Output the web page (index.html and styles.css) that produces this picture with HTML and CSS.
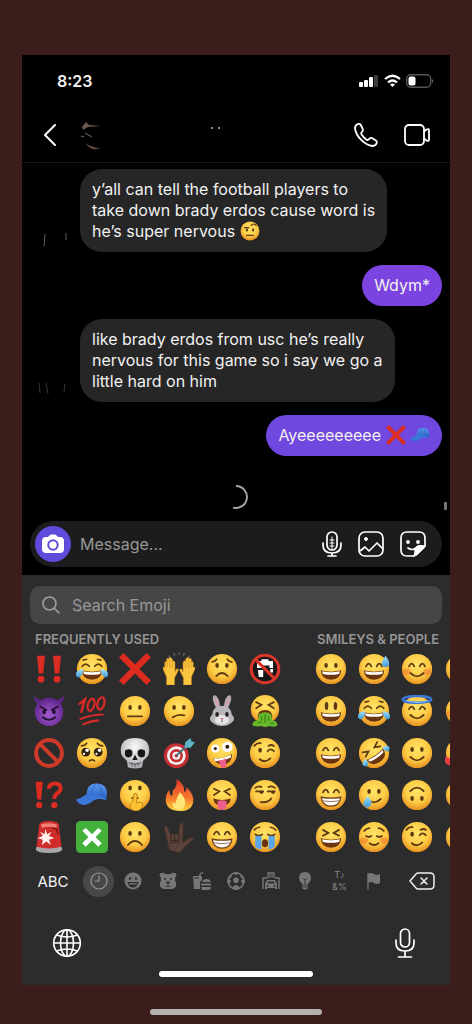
FILE: index.html
```
<!DOCTYPE html>
<html lang="en">

<head>
    <meta charset="UTF-8">
    <meta name="viewport" content="width=device-width, initial-scale=1.0">
    <title>Messages</title>
    <link rel="stylesheet" href="styles.css">
</head>

<body>
    <!-- emoji shapes -->
    <svg class="sprite" aria-hidden="true">
        <defs>
            <radialGradient id="gold" cx=".5" cy=".38" r=".64">
                <stop offset="0" stop-color="#ffe467" />
                <stop offset=".6" stop-color="#fccb45" />
                <stop offset="1" stop-color="#e58a1c" />
            </radialGradient>
            <radialGradient id="purple" cx=".5" cy=".6" r=".6">
                <stop offset="0" stop-color="#a35bd0" />
                <stop offset="1" stop-color="#5b2388" />
            </radialGradient>
            <radialGradient id="bone" cx=".5" cy=".3" r=".7">
                <stop offset="0" stop-color="#fafafa" />
                <stop offset="1" stop-color="#a9a8ad" />
            </radialGradient>
            <linearGradient id="flame" x1="0" y1="0" x2="0" y2="1">
                <stop offset="0" stop-color="#e2362a" />
                <stop offset=".6" stop-color="#f5792e" />
                <stop offset="1" stop-color="#fdd63c" />
            </linearGradient>
            <linearGradient id="tear" x1="0" y1="0" x2="0" y2="1">
                <stop offset="0" stop-color="#a6e2fa" />
                <stop offset="1" stop-color="#3d9bdc" />
            </linearGradient>
            <linearGradient id="blue" x1="0" y1="0" x2="0" y2="1">
                <stop offset="0" stop-color="#5c9cf5" />
                <stop offset="1" stop-color="#2457b8" />
            </linearGradient>
        </defs>

        <symbol id="face" viewBox="0 0 36 36">
            <circle cx="18" cy="18" r="17" fill="url(#gold)" />
        </symbol>
        <symbol id="dots" viewBox="0 0 36 36">
            <g fill="#5e3a12"><ellipse cx="12.5" cy="14" rx="2" ry="2.8" /><ellipse cx="23.5" cy="14" rx="2" ry="2.8" /></g>
        </symbol>
        <symbol id="arcs" viewBox="0 0 36 36">
            <path d="M9 15q3-6 6 0M21 15q3-6 6 0" fill="none" stroke="#5e3a12" stroke-width="2" stroke-linecap="round" />
        </symbol>
        <symbol id="grin-mouth" viewBox="0 0 36 36">
            <path d="M6.500 19.500q11.500 3 23 0q-.5 10.500-11.500 10.500t-11.500-10.500z" fill="#6b3510" />
            <path d="M8 20.500q10 2.500 20 0l-.8 3q-9.200 2-18.400 0z" fill="#fff" />
        </symbol>
        <symbol id="smile-mouth" viewBox="0 0 36 36">
            <path d="M10.500 22.500q7.500 7.500 15 0" fill="none" stroke="#5e3a12" stroke-width="2" stroke-linecap="round" />
        </symbol>

        <symbol id="e-bangs" viewBox="0 0 36 36">
            <g fill="#dc2b20"><path d="M4.500 3h9l-2 20h-5zM22.500 3h9l-2 20h-5z" /><circle cx="9" cy="29.500" r="3.800" /><circle cx="27" cy="29.500" r="3.800" /></g>
        </symbol>
        <symbol id="e-joy" viewBox="0 0 36 36">
            <use href="#face" /><use href="#grin-mouth" />
            <path d="M7 15q4-5 8 0M21 15q4-5 8 0M8 8l4-1M24 7l4 1" fill="none" stroke="#5e3a12" stroke-width="1.800" stroke-linecap="round" />
            <path d="M8 18q-8 1-8 6q0 4 4 3q4-2 4-9zM28 18q8 1 8 6q0 4-4 3q-4-2-4-9z" fill="url(#tear)" />
        </symbol>
        <symbol id="e-cross" viewBox="0 0 36 36">
            <path d="M5 0l13 13L31 0l5 5-13 13 13 13-5 5-13-13L5 36l-5-5 13-13L0 5z" fill="#dd2b20" />
        </symbol>
        <symbol id="e-hands" viewBox="0 0 36 36">
            <g id="hand-l" fill="#f9c440" stroke="#c98417" stroke-width=".6">
                <path d="M4 36v-9l-4-9q-1-3 2-2V11q0-2 2-1V8q0-3 2.500-1.500Q8 3 10.500 7v2q3-1 3 3v9l1.500-3q3-1 2 2l-4 8v8z" />
                <path d="M4.500 9v8M7.500 7v10M10.500 8v9" fill="none" />
            </g>
            <use href="#hand-l" transform="matrix(-1 0 0 1 36 0)" />
            <path d="M6 3l1.500 2M12 0l1 3M18 -1v3M24 0l-1 3M30 3l-1.500 2" stroke="#67676b" stroke-width="1.600" />
        </symbol>
        <symbol id="e-worried" viewBox="0 0 36 36">
            <use href="#face" /><use href="#dots" />
            <path d="M11.500 26q6.500-7 13 0M7 10q3 0 5-3M29 10q-3 0-5-3" fill="none" stroke="#5e3a12" stroke-width="2" stroke-linecap="round" />
        </symbol>
        <symbol id="e-nonpotable" viewBox="0 0 36 36">
            <circle cx="18" cy="18" r="15" fill="#171717" />
            <path d="M9 9h5V7h8v2h5v8h-4v-3h-8v3H9zM10 19h6v8h-5zM24 18h3v4h-3z" fill="#fff" />
            <circle cx="18" cy="18" r="15.500" fill="none" stroke="#d9362b" stroke-width="3.500" />
            <path d="M7 7l22 22" stroke="#d9362b" stroke-width="3.500" />
        </symbol>
        <symbol id="e-imp" viewBox="0 0 36 36">
            <path d="M1 0q0 9 6 11l6-5Q4 6 1 0zM35 0q0 9-6 11l-6-5q9 0 12-6z" fill="#5c2785" />
            <circle cx="18" cy="19" r="16" fill="url(#purple)" />
            <path d="M8 13l7 4M28 13l-7 4M11 25q7 6 14 0" fill="none" stroke="#231033" stroke-width="2" stroke-linecap="round" />
            <ellipse cx="12.500" cy="19" rx="2" ry="2.500" fill="#231033" /><ellipse cx="23.500" cy="19" rx="2" ry="2.500" fill="#231033" />
        </symbol>
        <symbol id="e-hundred" viewBox="0 0 36 36">
            <g fill="none" stroke="#d62a26" stroke-linecap="round">
                <path d="M4 10l6-5L6 19" stroke-width="2.800" />
                <ellipse cx="17" cy="11" rx="3.600" ry="7" transform="rotate(16 17 11)" stroke-width="2.600" />
                <ellipse cx="28" cy="9.500" rx="3.800" ry="7" transform="rotate(16 28 9.500)" stroke-width="2.600" />
                <path d="M5 27q13-5 25-5M8 33q8-4 17-4.500" stroke-width="2.400" />
            </g>
        </symbol>
        <symbol id="e-neutral" viewBox="0 0 36 36">
            <use href="#face" /><use href="#dots" />
            <path d="M10 24h16" stroke="#5e3a12" stroke-width="2" stroke-linecap="round" />
        </symbol>
        <symbol id="e-confused" viewBox="0 0 36 36">
            <use href="#face" /><use href="#dots" />
            <path d="M11 25q6-4 13-2" fill="none" stroke="#5e3a12" stroke-width="2" stroke-linecap="round" />
        </symbol>
        <symbol id="e-rabbit" viewBox="0 0 36 36">
            <path d="M12 16Q5 3 9 0q6 1 7 14zM24 16q7-13 3-16q-6 1-7 14z" fill="#b2adb4" />
            <path d="M12.500 13Q9 5 10 3q4 3 4 10zM23.500 13Q27 5 26 3q-4 3-4 10z" fill="#d99caf" />
            <path d="M18 12q10 0 11 10 5 5 0 9-5 4-11 4t-11-4q-5-4 0-9 1-10 11-10z" fill="#b9b5ba" />
            <ellipse cx="18" cy="28" rx="8" ry="5.500" fill="#e6e3e6" />
            <ellipse cx="12.500" cy="22" rx="2" ry="2.800" fill="#29242a" /><ellipse cx="23.500" cy="22" rx="2" ry="2.800" fill="#29242a" />
            <path d="M16 26h4l-2 2.500z" fill="#d07388" /><path d="M18 28v3" stroke="#5f565f" />
        </symbol>
        <symbol id="e-vomit" viewBox="0 0 36 36">
            <circle cx="18" cy="16" r="16" fill="url(#gold)" />
            <path d="M8 8l6 3-6 4M28 8l-6 3 6 4" fill="none" stroke="#5e3a12" stroke-width="2" stroke-linecap="round" />
            <path d="M10 26q-1-9 8-9t8 9z" fill="#6b3510" />
            <path d="M11 22q7-5 14 0l1 6q6 1 6 6-4 3-9 1-5 2-9 0-6 1-10-1-1-4 6-6z" fill="#68b82b" />
            <path d="M14 24v5M18 22v9M22 24v5M10 31h4M24 32h4" stroke="#3f8d1b" stroke-width="1.600" />
        </symbol>
        <symbol id="e-noentry" viewBox="0 0 36 36">
            <circle cx="18" cy="18" r="14.500" fill="none" stroke="#ce3a29" stroke-width="4.500" />
            <path d="M8 8l20 20" stroke="#ce3a29" stroke-width="4.500" />
        </symbol>
        <symbol id="e-pleading" viewBox="0 0 36 36">
            <use href="#face" />
            <circle cx="11" cy="17" r="5" fill="#33200f" /><circle cx="25" cy="17" r="5" fill="#33200f" />
            <g fill="#fff"><circle cx="12.500" cy="15" r="2" /><circle cx="26.500" cy="15" r="2" /><circle cx="9" cy="19" r="1.200" /><circle cx="23" cy="19" r="1.200" /></g>
            <path d="M15 27q3-2.500 6 0M6 10q4 0 6-3M30 10q-4 0-6-3" fill="none" stroke="#5e3a12" stroke-width="1.800" stroke-linecap="round" />
        </symbol>
        <symbol id="e-skull" viewBox="0 0 36 36">
            <path d="M18 1q16 0 16 14 0 6-4 9l-3 3-1 7q-8 3-16 0l-1-7-3-3q-4-3-4-9Q2 1 18 1z" fill="url(#bone)" />
            <path d="M7 15q6-3 8 1 1 6-4 7-6 0-4-8zM29 15q-6-3-8 1-1 6 4 7 6 0 4-8zM18 20l3 6h-6z" fill="#17171a" />
            <path d="M11 29q7 3 14 0M14.500 29v4M18 30v4M21.500 29v4" fill="none" stroke="#4c4b50" />
        </symbol>
        <symbol id="e-dart" viewBox="0 0 36 36">
            <circle cx="15" cy="21" r="14" fill="#c72f37" /><circle cx="15" cy="21" r="10.500" fill="#f3efed" />
            <circle cx="15" cy="21" r="7.500" fill="#c72f37" /><circle cx="15" cy="21" r="4.500" fill="#f3efed" /><circle cx="15" cy="21" r="2" fill="#c72f37" />
            <path d="M15 21L27 10" stroke="#2e6978" stroke-width="2" />
            <path d="M24 12l1-6 6-5 1 4 4 1-5 6z" fill="#5fb5c9" />
        </symbol>
        <symbol id="e-zany" viewBox="0 0 36 36">
            <use href="#face" />
            <circle cx="10.500" cy="13" r="4.500" fill="#fff" /><circle cx="24" cy="11" r="6" fill="#fff" />
            <circle cx="10.500" cy="13" r="1.800" fill="#33200f" /><circle cx="24" cy="11" r="2.200" fill="#33200f" />
            <path d="M8 24q11 1 21-5 1 9-8 12-9 1-13-7z" fill="#6b3510" /><path d="M9 24q10 1 19-4v3q-9 5-18 4z" fill="#fff" />
            <path d="M14 26q4 1 8-2l1 8q-2 4-6 2z" fill="#ee5f8c" />
        </symbol>
        <symbol id="e-wink" viewBox="0 0 36 36">
            <use href="#face" /><ellipse cx="12.500" cy="15" rx="2" ry="2.800" fill="#5e3a12" />
            <path d="M21 16q3-4 7 0M6 10q3-4 7-3M22 10q3-2 6 0M12 25q6 5 12-1" fill="none" stroke="#5e3a12" stroke-width="2" stroke-linecap="round" />
        </symbol>
        <symbol id="e-interrobang" viewBox="0 0 36 36">
            <path d="M3 3h8l-1.800 20H4.800z" fill="#dc2b20" /><circle cx="7" cy="29.500" r="3.500" fill="#dc2b20" />
            <path d="M18 11q0-6 7-6 6 0 6 5.500 0 3.500-4 6-3 2-3 6" fill="none" stroke="#dc2b20" stroke-width="4.600" /><circle cx="24" cy="29.500" r="3.500" fill="#dc2b20" />
        </symbol>
        <symbol id="e-cap" viewBox="0 0 36 36">
            <path d="M12 20Q11 5 23 5q12 0 12 12l-1 7q-9-4-18 0z" fill="url(#blue)" />
            <path d="M12 17q-6 5-12 6 3 7 11 6 5-1 9-5 7-3 14 0-3-7-22-7z" fill="#3a76da" />
            <path d="M23 5q-6 5-5 13M24 5q6 5 5 14" fill="none" stroke="#2b5cb5" stroke-width=".8" />
        </symbol>
        <symbol id="e-shush" viewBox="0 0 36 36">
            <use href="#face" /><use href="#dots" y="-4" />
            <path d="M14 22q4-3 8 0" fill="none" stroke="#5e3a12" stroke-width="1.800" />
            <path d="M18 16q3 0 2.500 3l-1 8 5-1q3 0 2 4-2 6-8 6-6-1-6-6 0-2 3-5l1-7q0-2 1.500-2z" fill="#fcc232" stroke="#b8730f" stroke-width=".9" />
        </symbol>
        <symbol id="e-fire" viewBox="0 0 36 36">
            <path d="M15 0q10 6 9 15 3-2 2-6 9 8 8 16-1 11-15 11Q4 36 3 24q0-7 4-12 0 5 3 7 1-2 1-6 6-5 4-13z" fill="url(#flame)" />
            <path d="M19 15q7 7 6 13-1 6-7 7-8-1-7-9 1 1 3 2 1-7 5-13z" fill="#ffe879" />
        </symbol>
        <symbol id="e-squint-tongue" viewBox="0 0 36 36">
            <use href="#face" />
            <path d="M9 11l6 3-6 4M27 11l-6 3 6 4" fill="none" stroke="#5e3a12" stroke-width="2" stroke-linecap="round" />
            <path d="M8 22q10 3 20 0-1 8-10 8T8 22z" fill="#6b3510" /><path d="M13 25q5-2 10 0v7q-5 6-10 0z" fill="#ee5f8c" />
        </symbol>
        <symbol id="e-smirk" viewBox="0 0 36 36">
            <use href="#face" /><ellipse cx="14" cy="15" rx="2" ry="2" fill="#5e3a12" /><ellipse cx="27" cy="15" rx="2" ry="2" fill="#5e3a12" />
            <path d="M8 14h8M21 14h8M7 10q4-3 7-1M22 9q4-2 7 1M13 26q9 1 12-4" fill="none" stroke="#5e3a12" stroke-width="2" stroke-linecap="round" />
        </symbol>
        <symbol id="e-siren" viewBox="0 0 36 36">
            <path d="M4 29h28l1 3q-2 4-15 4T3 32z" fill="#aaa7aa" />
            <path d="M7 4q1-4 11-4t11 4l3 25q-14 4-28 0z" fill="#cf2d2b" />
            <path d="M9 4q8-3 18 0l-1 4q-8-3-16 0z" fill="#f18178" />
            <path d="M14 9l2 6 5-3-3 5 6 2-6 2 2 6-5-4-5 4 1-6-6-2 6-2-3-5 5 3z" fill="#fff0eb" />
            <path d="M22 8q6 0 6 7" fill="none" stroke="#7d1515" stroke-width="2" />
        </symbol>
        <symbol id="e-green-cross" viewBox="0 0 36 36">
            <rect width="36" height="36" rx="5" fill="#43b03a" />
            <path d="M11 8l7 7 7-7 4 3-7 7 7 7-4 4-7-7-7 7-4-4 7-7-7-7z" fill="#fff" />
        </symbol>
        <symbol id="e-frown" viewBox="0 0 36 36">
            <use href="#face" /><use href="#dots" />
            <path d="M10 27q8-9 16 0" fill="none" stroke="#5e3a12" stroke-width="2" stroke-linecap="round" />
        </symbol>
        <symbol id="e-love-hand" viewBox="0 0 36 36">
            <path d="M7 33L4 19 1 8q1-4 4-1l4 9q2-4 4 0 2-4 4 0l2-13q3-3 4 1l-1 20 8-5q6-2 5 1l-10 9-6 7z" fill="#5a4238" stroke="#3a2a24" stroke-width=".7" />
            <path d="M9 16v6h4v-6M13 22h5v-7M7 25q7-3 12 0" fill="none" stroke="#33241f" />
        </symbol>
        <symbol id="e-beam" viewBox="0 0 36 36">
            <use href="#face" /><use href="#arcs" />
            <path d="M7 20.500q11 2 22 0-1 10-11 10t-11-10z" fill="#fff" stroke="#70401a" stroke-width="1.500" />
            <path d="M8 24.500q10 2 20 0" fill="none" stroke="#8a6544" stroke-width="1" />
        </symbol>
        <symbol id="e-sob" viewBox="0 0 36 36">
            <use href="#face" />
            <path d="M6 10q3-3 6-3M30 10q-3-3-6-3M7 15q4 3 8 0M21 15q4 3 8 0" fill="none" stroke="#5e3a12" stroke-width="1.800" stroke-linecap="round" />
            <path d="M7 17h7v15q-4 0-7-3zM22 17h7v12q-3 3-7 3z" fill="#5aa6e8" /><ellipse cx="18" cy="25" rx="3.500" ry="4.500" fill="#6b3510" />
        </symbol>
        <symbol id="e-grinning" viewBox="0 0 36 36">
            <use href="#face" /><use href="#dots" /><use href="#grin-mouth" />
        </symbol>
        <symbol id="e-sweat" viewBox="0 0 36 36">
            <use href="#face" /><use href="#arcs" /><use href="#grin-mouth" />
            <path d="M31 3q5 7 4 10-1 3-4 3t-4-3q-1-3 4-10z" fill="url(#tear)" />
        </symbol>
        <symbol id="e-blush" viewBox="0 0 36 36">
            <use href="#face" /><use href="#arcs" /><use href="#smile-mouth" />
            <g fill="#ef682b" opacity=".45"><ellipse cx="6.500" cy="21" rx="4.500" ry="3.500" /><ellipse cx="29.500" cy="21" rx="4.500" ry="3.500" /></g>
        </symbol>
        <symbol id="e-smiley" viewBox="0 0 36 36">
            <use href="#face" /><use href="#grin-mouth" />
            <g fill="#5e3a12"><ellipse cx="13" cy="12.500" rx="2" ry="4.500" /><ellipse cx="23" cy="12.500" rx="2" ry="4.500" /></g>
        </symbol>
        <symbol id="e-halo" viewBox="0 0 36 36">
            <use href="#face" /><use href="#arcs" y="1" /><use href="#smile-mouth" />
            <ellipse cx="18" cy="5" rx="16" ry="3.800" fill="none" stroke="#3d78d8" stroke-width="2.800" />
            <path d="M5 6q13 5 26 0" fill="none" stroke="#8fc6ff" stroke-width="1" />
        </symbol>
        <symbol id="e-smile" viewBox="0 0 36 36">
            <use href="#face" /><use href="#arcs" /><use href="#grin-mouth" />
        </symbol>
        <symbol id="e-rofl" viewBox="0 0 36 36">
            <use href="#face" />
            <g transform="rotate(-35 18 18)"><use href="#grin-mouth" />
                <path d="M8 10l6 3-6 3M28 10l-6 3 6 3" fill="none" stroke="#5e3a12" stroke-width="2" stroke-linecap="round" />
                <path d="M7 18q-8 1-7 5 3 4 6 1zM29 18q8 1 7 5-3 4-6 1z" fill="url(#tear)" /></g>
        </symbol>
        <symbol id="e-slight" viewBox="0 0 36 36">
            <use href="#face" /><use href="#dots" /><use href="#smile-mouth" />
        </symbol>
        <symbol id="e-upside" viewBox="0 0 36 36">
            <use href="#face" />
            <g transform="rotate(180 18 18)"><use href="#dots" /><use href="#smile-mouth" /></g>
        </symbol>
        <symbol id="e-touched" viewBox="0 0 36 36">
            <use href="#face" /><use href="#dots" /><use href="#smile-mouth" />
            <path d="M11 19q5 6 4 9-1 3-4 4-4 0-5-4 0-3 5-9z" fill="url(#tear)" />
        </symbol>
        <symbol id="e-laughing" viewBox="0 0 36 36">
            <use href="#face" /><use href="#grin-mouth" />
            <path d="M9 10l6 3.500-6 3M27 10l-6 3.500 6 3" fill="none" stroke="#5e3a12" stroke-width="2" stroke-linecap="round" />
        </symbol>
        <symbol id="e-relaxed" viewBox="0 0 36 36">
            <use href="#face" />
            <path d="M9 17q3 2 6 0M21 17q3 2 6 0M7 11q3-3 6-3M29 11q-3-3-6-3M13 25q5 4 10 0" fill="none" stroke="#5e3a12" stroke-width="2" stroke-linecap="round" />
            <g fill="#ef682b" opacity=".45"><ellipse cx="7" cy="22" rx="4.500" ry="3.500" /><ellipse cx="29" cy="22" rx="4.500" ry="3.500" /></g>
        </symbol>
        <symbol id="e-hearts" viewBox="0 0 36 36">
            <use href="#face" /><use href="#arcs" /><use href="#smile-mouth" />
            <path d="M4 32q-7-5-5-8 3-3 5 0 3-3 5 0 2 4-5 8z" fill="#e63c42" />
        </symbol>
        <symbol id="e-raised-brow" viewBox="0 0 36 36">
            <use href="#face" /><use href="#dots" y="2" />
            <path d="M8 12h8M20 8q5-5 9 0M12 26h12" fill="none" stroke="#5e3a12" stroke-width="2.200" stroke-linecap="round" />
        </symbol>
    </svg>

    <main class="phone">
        <div class="statusbar">
            <time class="clock">8:23</time>
            <div class="statusicons">
                <svg width="20" height="14" viewBox="0 0 20 14" fill="#fff" aria-hidden="true">
                    <rect x="0" y="8" width="4" height="5" rx="1" /><rect x="5" y="6" width="4" height="7" rx="1" />
                    <rect x="10" y="3" width="4" height="10" rx="1" /><rect x="15" y="1" width="4" height="12" rx="1" fill="#3c3c3c" />
                </svg>
                <svg width="17" height="14" viewBox="0 0 17 14" fill="none" stroke="#fff" stroke-width="2.200" aria-hidden="true">
                    <path d="M1 5q7.500-6.500 15 0M4 8.500q4.500-4 9 0" /><path d="M6 10.500q2.500-2 5 0L8.500 13z" fill="#fff" stroke="none" />
                </svg>
                <svg width="28" height="14" viewBox="0 0 28 14" aria-hidden="true">
                    <rect x=".7" y=".7" width="24" height="12.600" rx="4" fill="none" stroke="#555" stroke-width="1.400" />
                    <rect x="2.500" y="2.500" width="7" height="9" rx="2" fill="#fff" /><path d="M26 5q2 2 0 4z" fill="#777" />
                </svg>
            </div>
        </div>

        <header class="chatheader">
            <button class="iconbtn" aria-label="Back">
                <svg width="14" height="22" viewBox="0 0 14 22" fill="none" stroke="#fff" stroke-width="2" stroke-linecap="round" stroke-linejoin="round"><path d="M12 1L2 11l10 10" /></svg>
            </button>
            <!-- what is left of the scribbled out name -->
            <svg class="scribble" width="150" height="32" viewBox="0 0 150 32" aria-hidden="true">
                <path d="M2 8l4-5 3 3 12 1-13 1-5 3z" fill="#6e574d" /><path d="M5 14l7 4M1 17l3 1" stroke="#776c68" />
                <path d="M5 24q7 5 16 5-9 3-13-2z" fill="#6b4c40" />
                <path d="M131 9h2M138 9h2" stroke="#b9b9b9" stroke-width="1.500" />
            </svg>
            <button class="iconbtn" aria-label="Audio call">
                <svg width="24" height="24" viewBox="0 0 24 24" fill="none" stroke="#fff" stroke-width="1.800" stroke-linejoin="round"><path d="M3.300 1.300Q1 2.500 1 5.500 2 12 7.500 17.200 13 22.500 18.500 23q3 0 4.200-2.800.6-1.600-.8-2.700l-3.600-2.300q-1.500-.8-2.800.4l-1.300 1.200q-.8.500-1.600-.1-3.200-2.400-5.200-5.500-.4-.8.100-1.600l1-1.400q.9-1.300 0-2.700L6.800 1.900Q5.500.3 3.300 1.300z" /></svg>
            </button>
            <button class="iconbtn" aria-label="Video call">
                <svg width="26" height="24" viewBox="0 0 26 24" fill="none" stroke="#fff" stroke-width="1.800" stroke-linejoin="round"><rect x="1" y="2" width="19" height="20" rx="4" /><path d="M20 8.500l2.500-2q2.500-1.200 2.500 1v9q0 2.200-2.500 1L20 15.500" /></svg>
            </button>
        </header>

        <section class="thread">
            <div class="received">
                <svg class="avatar" width="36" height="24" viewBox="0 0 36 24" aria-hidden="true"><path d="M2 6l-1 12M23 5v7" stroke="#655b57" /></svg>
                <p class="bubble">y’all can tell the football players to<br>take down brady erdos cause word is<br>he’s super nervous <svg class="inlineemoji" role="img" aria-label="raised eyebrow"><use href="#e-raised-brow" /></svg></p>
            </div>
            <p class="bubble sent">Wdym*</p>
            <div class="received">
                <svg class="avatar" width="36" height="24" viewBox="0 0 36 24" aria-hidden="true"><path d="M-4 5l1 10M3 5l2 11M22 6l-1 8" stroke="#3e332f" /></svg>
                <p class="bubble">like brady erdos from usc he’s really<br>nervous for this game so i say we go a<br>little hard on him</p>
            </div>
            <p class="bubble sent blue">Ayeeeeeeeee <svg class="inlineemoji" role="img" aria-label="cross mark"><use href="#e-cross" /></svg> <svg class="inlineemoji" role="img" aria-label="cap"><use href="#e-cap" /></svg></p>
            <div class="loading">
                <svg width="24" height="24" viewBox="0 0 24 24" fill="none" stroke="#a3a3a3" stroke-width="2" aria-hidden="true"><path d="M12 1a11 11 0 1 1-3 21.600" /></svg>
                <span class="scrollmark"></span>
            </div>
        </section>

        <form class="composer">
            <button type="button" class="camera" aria-label="Camera">
                <svg width="22" height="20" viewBox="0 0 22 20"><path d="M7 2q1-1.500 2-1.500h4q1 0 2 1.500l1 1h2q4 0 4 4v8q0 4-4 4H4q-4 0-4-4V7q0-4 4-4h2z" fill="#fff" /><circle cx="11" cy="11" r="4.700" fill="none" stroke="#5e4bdc" stroke-width="2" /></svg>
            </button>
            <input class="messagebox" type="text" placeholder="Message..." aria-label="Message">
            <button type="button" class="iconbtn" aria-label="Voice message">
                <svg width="20" height="26" viewBox="0 0 20 26" fill="none" stroke="#fff" stroke-width="1.700" stroke-linecap="round"><rect x="5" y="1" width="10" height="18" rx="5" /><path d="M1 12v2q0 8 9 8t9-8v-2M10 22v3M6 25h8" /><path d="M8 9h4M8 12h4M8 15h4M10 6v12" stroke-width="1" /></svg>
            </button>
            <button type="button" class="iconbtn" aria-label="Photo">
                <svg width="26" height="26" viewBox="0 0 26 26" fill="none" stroke="#fff" stroke-width="1.700" stroke-linejoin="round"><rect x="1" y="1" width="24" height="24" rx="6" /><circle cx="8" cy="8" r="1.500" fill="#fff" stroke-width="1" /><path d="M2 20l5-4 4 4 8-8 6 6" /></svg>
            </button>
            <button type="button" class="iconbtn" aria-label="Sticker">
                <svg width="26" height="26" viewBox="0 0 26 26" fill="none" stroke="#fff" stroke-width="1.700" stroke-linecap="round"><path d="M14 25H7q-6 0-6-6V7q0-6 6-6h12q6 0 6 6v8M8 17q4 3 8 0" /><path d="M14 25q2 0 4-2l5-5q2-1 2-3-9-2-10 3 0 4-1 7z" fill="#fff" stroke-width="1" /><g fill="#fff" stroke="none"><circle cx="8" cy="11" r="1.900" /><circle cx="18" cy="11" r="1.900" /></g></svg>
            </button>
        </form>

        <section class="keyboard">
            <label class="search">
                <svg width="18" height="18" viewBox="0 0 18 18" fill="none" stroke="#a0a0a0" stroke-width="1.600" stroke-linecap="round" aria-hidden="true"><circle cx="7.500" cy="7.500" r="6.500" /><path d="M12.200 12.200L17 17" /></svg>
                <input type="search" placeholder="Search Emoji" aria-label="Search Emoji">
            </label>

            <div class="emojipages">
                <div class="emojipage">
                    <h2>FREQUENTLY USED</h2>
                    <div class="emojigrid">
                        <button aria-label="double exclamation"><svg><use href="#e-bangs" /></svg></button>
                        <button aria-label="tears of joy"><svg><use href="#e-joy" /></svg></button>
                        <button aria-label="cross mark"><svg><use href="#e-cross" /></svg></button>
                        <button aria-label="raising hands"><svg><use href="#e-hands" /></svg></button>
                        <button aria-label="worried"><svg><use href="#e-worried" /></svg></button>
                        <button aria-label="non-potable water"><svg><use href="#e-nonpotable" /></svg></button>

                        <button aria-label="smiling imp"><svg><use href="#e-imp" /></svg></button>
                        <button aria-label="hundred points"><svg><use href="#e-hundred" /></svg></button>
                        <button aria-label="neutral"><svg><use href="#e-neutral" /></svg></button>
                        <button aria-label="confused"><svg><use href="#e-confused" /></svg></button>
                        <button aria-label="rabbit"><svg><use href="#e-rabbit" /></svg></button>
                        <button aria-label="vomiting"><svg><use href="#e-vomit" /></svg></button>

                        <button aria-label="prohibited"><svg><use href="#e-noentry" /></svg></button>
                        <button aria-label="pleading"><svg><use href="#e-pleading" /></svg></button>
                        <button aria-label="skull"><svg><use href="#e-skull" /></svg></button>
                        <button aria-label="bullseye"><svg><use href="#e-dart" /></svg></button>
                        <button aria-label="zany"><svg><use href="#e-zany" /></svg></button>
                        <button aria-label="winking"><svg><use href="#e-wink" /></svg></button>

                        <button aria-label="exclamation question"><svg><use href="#e-interrobang" /></svg></button>
                        <button aria-label="cap"><svg><use href="#e-cap" /></svg></button>
                        <button aria-label="shushing"><svg><use href="#e-shush" /></svg></button>
                        <button aria-label="fire"><svg><use href="#e-fire" /></svg></button>
                        <button aria-label="squinting with tongue"><svg><use href="#e-squint-tongue" /></svg></button>
                        <button aria-label="smirking"><svg><use href="#e-smirk" /></svg></button>

                        <button aria-label="police light"><svg><use href="#e-siren" /></svg></button>
                        <button aria-label="cross mark button"><svg><use href="#e-green-cross" /></svg></button>
                        <button aria-label="frowning"><svg><use href="#e-frown" /></svg></button>
                        <button aria-label="love you gesture"><svg><use href="#e-love-hand" /></svg></button>
                        <button aria-label="beaming"><svg><use href="#e-beam" /></svg></button>
                        <button aria-label="sobbing"><svg><use href="#e-sob" /></svg></button>
                    </div>
                </div>
                <div class="emojipage">
                    <h2>SMILEYS &amp; PEOPLE</h2>
                    <div class="emojigrid">
                        <button aria-label="grinning"><svg><use href="#e-grinning" /></svg></button>
                        <button aria-label="grinning with sweat"><svg><use href="#e-sweat" /></svg></button>
                        <button aria-label="blushing smile"><svg><use href="#e-blush" /></svg></button>
                        <button class="lastcol" aria-label="smile"><svg><use href="#face" /></svg></button>

                        <button aria-label="big smile"><svg><use href="#e-smiley" /></svg></button>
                        <button aria-label="tears of joy"><svg><use href="#e-joy" /></svg></button>
                        <button aria-label="halo"><svg><use href="#e-halo" /></svg></button>
                        <button class="lastcol" aria-label="blush"><svg><use href="#e-blush" /></svg></button>

                        <button aria-label="smiling eyes"><svg><use href="#e-smile" /></svg></button>
                        <button aria-label="rolling laughing"><svg><use href="#e-rofl" /></svg></button>
                        <button aria-label="slight smile"><svg><use href="#e-slight" /></svg></button>
                        <button class="lastcol" aria-label="hearts"><svg><use href="#e-hearts" /></svg></button>

                        <button aria-label="beaming"><svg><use href="#e-beam" /></svg></button>
                        <button aria-label="smiling with tear"><svg><use href="#e-touched" /></svg></button>
                        <button aria-label="upside down"><svg><use href="#e-upside" /></svg></button>
                        <button class="lastcol" aria-label="smile"><svg><use href="#face" /></svg></button>

                        <button aria-label="squinting laugh"><svg><use href="#e-laughing" /></svg></button>
                        <button aria-label="relaxed"><svg><use href="#e-relaxed" /></svg></button>
                        <button aria-label="winking"><svg><use href="#e-wink" /></svg></button>
                        <button class="lastcol" aria-label="smile"><svg><use href="#face" /></svg></button>
                    </div>
                </div>
            </div>

            <nav class="categories" aria-label="Emoji categories">
                <button class="abc">ABC</button>
                <div class="categorylist">
                    <button class="active" aria-label="Recent"><svg viewBox="0 0 18 18" fill="none" stroke="#999" stroke-width="1.200"><circle cx="9" cy="9" r="8" /><path d="M9 3.500V9H5" /></svg></button>
                    <button aria-label="Smileys"><svg viewBox="0 0 18 18"><circle cx="9" cy="9" r="8.500" fill="#777" /><path d="M3.500 10h11q-1 5.500-5.500 5.500T3.500 10z" fill="#2c2c2c" /><path d="M5 11.200h8v1.300H5z" fill="#777" /><circle cx="6" cy="6.500" r="1.200" fill="#2c2c2c" /><circle cx="12" cy="6.500" r="1.200" fill="#2c2c2c" /></svg></button>
                    <button aria-label="Animals"><svg viewBox="0 0 18 18"><path d="M2 6Q-1 2 2 1q3-1 4 1h6q1-2 4-1 3 1 0 5 0 3 1 5 1 6-5 6H6q-6 0-5-6 1-2 1-5z" fill="#777" /><circle cx="6" cy="7" r="1" fill="#2c2c2c" /><circle cx="12" cy="7" r="1" fill="#2c2c2c" /><path d="M7 10h4l-2 2zM9 12v1.500M6.500 14q2.500 1 5 0" fill="#2c2c2c" stroke="#2c2c2c" stroke-width=".7" /></svg></button>
                    <button aria-label="Food"><svg viewBox="0 0 18 18"><path d="M0 4h9v4q-2 1-2 3v6H1zM6 4l1-3 3-1 .5 1-2.500 1-.5 2zM9 10q1-3 4.500-3T18 10zM8 11.500h10v2H8zM8 15h10q0 3-3 3H9z" fill="#777" /><path d="M1 6h5" stroke="#2c2c2c" /></svg></button>
                    <button aria-label="Activity"><svg viewBox="0 0 18 18"><circle cx="9" cy="9" r="8" fill="none" stroke="#777" stroke-width="1.600" /><path d="M6 7l3-2 3 2-1 4H7zM5 1l4 2 4-2-4-1zM1 7l3 1-1 4-3-2zM17 7l-3 1 1 4 3-2zM6 14l3-1 3 1-1 4H7zM3 3l2 1-2 3zM15 3l-2 1 2 3z" fill="#777" /></svg></button>
                    <button aria-label="Travel"><svg viewBox="0 0 18 18"><path d="M6 6V1h6v5M1 17V6h4M17 17V6h-4" fill="none" stroke="#777" stroke-width="1.400" /><path d="M5 8h8l2 4v5h-2v-1H5v1H3v-5z" fill="#777" /><path d="M6 9.500h6l.7 2H5.300z" fill="#2c2c2c" /><circle cx="5.500" cy="14" r="1" fill="#2c2c2c" /><circle cx="12.500" cy="14" r="1" fill="#2c2c2c" /><path d="M8 2v4M10 2v4" stroke="#777" /></svg></button>
                    <button aria-label="Objects"><svg viewBox="0 0 18 18"><path d="M9 0q6 0 6 6 0 3-3 6v4q-3 3-6 0v-4Q3 9 3 6q0-6 6-6z" fill="#777" /><path d="M6 13h6M6 15h6M9 12V8L7 6M9 8l2-2" stroke="#2c2c2c" stroke-width=".8" fill="none" /></svg></button>
                    <button class="symbols" aria-label="Symbols"><span>T♪</span><span>&amp;%</span></button>
                    <button aria-label="Flags"><svg viewBox="0 0 18 18"><path d="M3 1v16.500" stroke="#777" stroke-width="1.300" /><path d="M3 2q3-2 6 0t6 0v9q-3 2-6 0t-6 0z" fill="#777" /></svg></button>
                </div>
                <button class="iconbtn" aria-label="Delete">
                    <svg width="26" height="18" viewBox="0 0 26 18" fill="none" stroke="#eee" stroke-width="1.500" stroke-linecap="round" stroke-linejoin="round"><path d="M9 1h12q4 0 4 4v8q0 4-4 4H9q-1 0-2-1L1 9l6-7q1-1 2-1zM12 6l6 6M18 6l-6 6" /></svg>
                </button>
            </nav>

            <div class="bottomkeys">
                <button class="iconbtn" aria-label="Next keyboard">
                    <svg width="30" height="30" viewBox="0 0 30 30" fill="none" stroke="#fff" stroke-width="1.600"><circle cx="15" cy="15" r="13.300" /><ellipse cx="15" cy="15" rx="6.500" ry="13.300" /><path d="M15 2v26M2 15h26M4.500 7q10.500 4 21 0M4.500 23q10.500-4 21 0" /></svg>
                </button>
                <button class="iconbtn" aria-label="Dictate">
                    <svg width="22" height="30" viewBox="0 0 22 30" fill="none" stroke="#fff" stroke-width="1.700" stroke-linecap="round"><rect x="6.500" y="1" width="9" height="18" rx="4.500" /><path d="M2 12v3q0 8 9 8t9-8v-3M11 23v6M4.500 29h13" /></svg>
                </button>
            </div>
            <div class="homebar"></div>
        </section>
    </main>
    <div class="homebar outer"></div>
</body>

</html>
```
FILE: styles.css
```
* {
    margin: 0;
    padding: 0;
    box-sizing: border-box;
}

body {
    background-color: #3b1d1b;
    font-family: Inter, "Liberation Sans", sans-serif;
    padding: 55px 22px 9px;
    color: #f2f2f2;
}

button {
    border: none;
    background: none;
    color: inherit;
    font-family: inherit;
}

input {
    border: none;
    outline: none;
    background: none;
    color: #fff;
    font-family: inherit;
    font-size: 16px;
    min-width: 0;
    flex: 1;
}

input::placeholder {
    color: #989898;
    opacity: 1;
}

.sprite {
    position: absolute;
    width: 0;
    height: 0;
}

.phone {
    background-color: #000;
}

.iconbtn {
    display: flex;
    align-items: center;
    justify-content: center;
}

/* top of the chat */
.statusbar {
    display: flex;
    justify-content: space-between;
    align-items: center;
    height: 52px;
    padding: 0 16px 0 35px;
}

.clock {
    font-size: 16px;
    font-weight: 600;
}

.statusicons {
    display: flex;
    gap: 5px;
}

.chatheader {
    display: flex;
    align-items: center;
    height: 56px;
    padding: 0 20px 0 21px;
    border-bottom: 1px solid #161616;
}

.scribble {
    margin-left: 23px;
    margin-right: auto;
}

.chatheader .iconbtn:last-child {
    margin-left: 26px;
}

/* messages */
.thread {
    display: flex;
    flex-direction: column;
    gap: 13px;
    padding: 6px 8px 0;
}

.received {
    display: flex;
    align-items: flex-end;
    gap: 1px;
    padding-left: 13px;
}

.avatar {
    overflow: visible;
    flex-shrink: 0;
}

.bubble {
    background-color: #262626;
    border-radius: 22px;
    padding: 10px 12px;
    font-size: 16px;
    line-height: 21px;
}

.sent {
    align-self: flex-end;
    background-color: #7b43df;
}

.blue {
    background-color: #7047df;
}

.inlineemoji {
    width: 20px;
    height: 20px;
    vertical-align: -4px;
}

.loading {
    display: flex;
    align-items: center;
    justify-content: center;
    height: 52px;
    position: relative;
    padding-top: 4px;
}

.scrollmark {
    position: absolute;
    right: -5px;
    bottom: 11px;
    width: 3px;
    height: 8px;
    border-radius: 1px;
    background-color: #777;
}

.composer {
    display: flex;
    align-items: center;
    height: 46px;
    margin: 0 8px;
    padding: 0 16px 0 5px;
    border-radius: 23px;
    background-color: #1c1c1c;
    gap: 16px;
}

.camera {
    display: flex;
    align-items: center;
    justify-content: center;
    width: 36px;
    height: 36px;
    border-radius: 50%;
    background-color: #5e4bdc;
}

.messagebox {
    margin-left: -7px;
}

/* emoji keyboard */
.keyboard {
    margin-top: 8px;
    padding: 11px 0 8px;
    background-color: #2c2c2c;
    overflow: hidden;
}

.search {
    display: flex;
    align-items: center;
    gap: 12px;
    height: 38px;
    margin: 0 8px;
    padding: 0 12px;
    border-radius: 10px;
    background-color: #464646;
}

.emojipages {
    display: flex;
    gap: 22px;
    padding-left: 5px;
    overflow: hidden;
}

.emojipage {
    flex: 0 0 260px;
}

.emojipage h2 {
    padding: 7px 8px 0;
    font-size: 13px;
    line-height: 17px;
    font-weight: 600;
    color: #959595;
    white-space: nowrap;
}

.emojigrid {
    display: grid;
    grid-template-columns: repeat(6, 1fr);
    grid-auto-rows: 42px;
}

.emojigrid button {
    display: flex;
    align-items: center;
    justify-content: center;
}

.emojigrid svg {
    width: 32px;
    height: 32px;
    flex-shrink: 0;
    overflow: visible;
}

.emojigrid .lastcol {
    grid-column: 4 / 7;
    justify-content: flex-start;
    padding-left: 6px;
}

.categories {
    display: flex;
    align-items: center;
    height: 46px;
    padding: 0 15px;
}

.abc {
    width: 32px;
    font-size: 15px;
}

.categorylist {
    display: flex;
    flex: 1;
    margin: 0 18px 0 12px;
}

.categorylist button {
    flex: 1;
    display: flex;
    align-items: center;
    justify-content: center;
    height: 31px;
}

.categorylist svg {
    width: 18px;
    height: 18px;
}

.categorylist .active {
    flex: 0 0 31px;
    margin: 0 2px;
    border-radius: 50%;
    background-color: #484848;
}

.categorylist .symbols {
    flex-direction: column;
    font-size: 9px;
    line-height: 12px;
    color: #888;
}

.bottomkeys {
    display: flex;
    justify-content: space-between;
    align-items: center;
    height: 67px;
    padding: 10px 34px 0 30px;
}

.homebar {
    width: 36%;
    height: 6px;
    margin: 0 auto;
    border-radius: 3px;
    background-color: #fff;
}

.outer {
    width: 40%;
    margin-top: 24px;
    background-color: #b5b1ae;
}
```
